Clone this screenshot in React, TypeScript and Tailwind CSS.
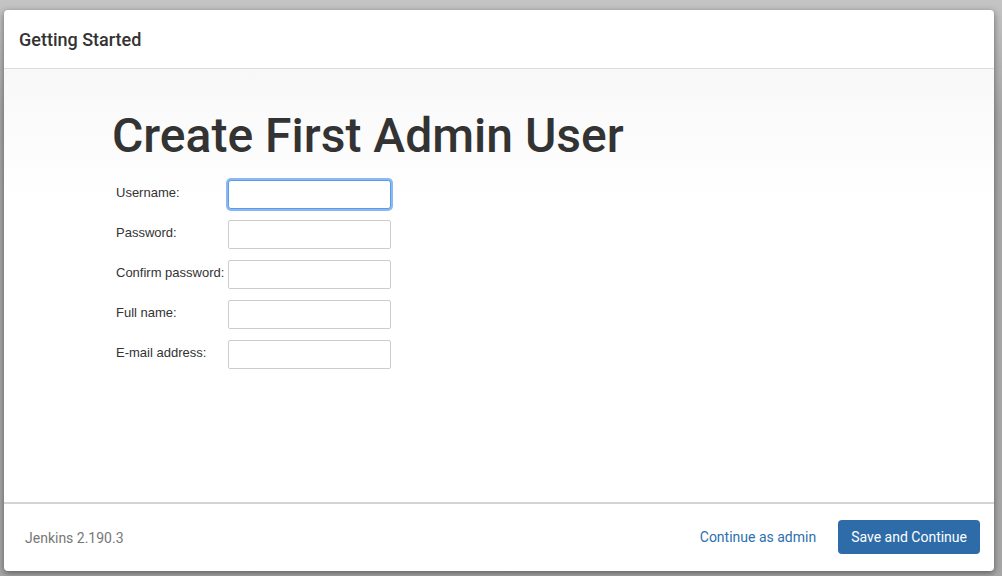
export default function App() {
  const fields = [
    { label: "Username:", type: "text", focused: true },
    { label: "Password:", type: "password" },
    { label: "Confirm password:", type: "password" },
    { label: "Full name:", type: "text" },
    { label: "E-mail address:", type: "text" },
  ]

  return (
    <div className="w-[1002px] h-[576px] overflow-hidden bg-linear-to-b from-[#c4c4c4] to-[#a6a6a6] to-20% pt-[10px] pl-[4px] font-['Roboto',sans-serif]">
      <div className="w-[990px] h-[561px] bg-white rounded-[4px] shadow-[0_2px_6px_rgba(0,0,0,0.45)] flex flex-col overflow-hidden">
        {/* Header */}
        <div className="h-[59px] shrink-0 border-b border-[#dcdcdc] flex items-center px-[15px]">
          <h4 className="text-[18px] font-medium text-[#333] pt-[1px]">Getting Started</h4>
        </div>

        {/* Body */}
        <div className="flex-1 bg-linear-to-b from-[#f8f8f8] to-white to-[30%] pl-[108px] pt-[37px]">
          <h1 className="text-[48px] leading-[60px] text-[#333] font-medium">
            Create First Admin User
          </h1>
          <div className="mt-[14px] flex flex-col gap-[11px] font-['Liberation_Sans',Arial,sans-serif]">
            {fields.map((f) => (
              <div key={f.label} className="flex items-center h-[29px]">
                <label className="w-[116px] pl-[4px] whitespace-nowrap text-[13px] text-[#333] -mt-[3px]">{f.label}</label>
                <input
                  type={f.type}
                  className={
                    f.focused
                      ? "w-[163px] h-[29px] bg-white border border-[#5b9bea] rounded-[3px] outline-none ring-2 ring-[#8ab8f2] text-[13px] px-2"
                      : "w-[163px] h-[29px] bg-white border border-[#cccccc] rounded-[2px] outline-none text-[13px] px-2"
                  }
                />
              </div>
            ))}
          </div>
        </div>

        {/* Footer */}
        <div className="h-[69px] shrink-0 border-t-2 border-[#d4d4d4] flex items-center justify-between pl-[21px] pr-[14px]">
          <span className="text-[14px] text-[#777] mt-[2px]">Jenkins 2.190.3</span>
          <div className="flex items-center gap-[22px] -mt-[1px]">
            <a href="#" className="text-[14px] text-[#2d6fb0]">Continue as admin</a>
            <button className="h-[34px] px-[13px] bg-[#2d6ca8] rounded-[4px] text-white text-[14px]">
              Save and Continue
            </button>
          </div>
        </div>
      </div>
    </div>
  )
}
